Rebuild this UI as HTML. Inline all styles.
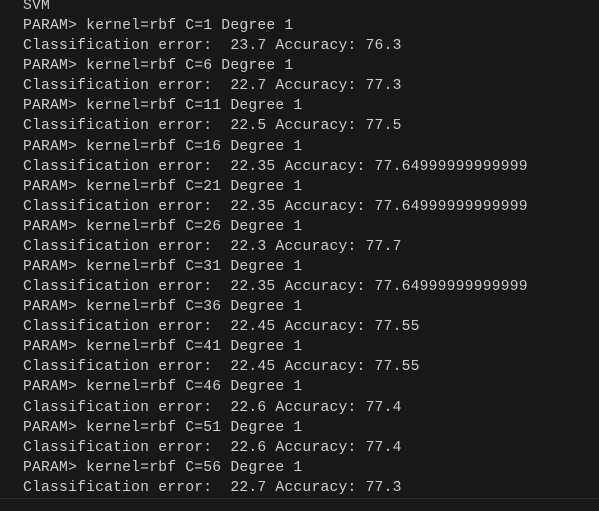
<!DOCTYPE html>
<html><head><style>
html,body{margin:0;padding:0;background:#181818;width:599px;height:511px;overflow:hidden}
.t{position:absolute;left:23px;top:-4px;font-family:"Liberation Mono",monospace;font-size:14.7px;letter-spacing:0.2px;line-height:20.08px;color:#cccccc;white-space:pre}
.hr{position:absolute;left:0;top:498px;width:599px;height:1px;background:#2b2b2b}
</style></head><body>
<div class="t">SVM
PARAM&gt; kernel=rbf C=1 Degree 1
Classification error:  23.7 Accuracy: 76.3
PARAM&gt; kernel=rbf C=6 Degree 1
Classification error:  22.7 Accuracy: 77.3
PARAM&gt; kernel=rbf C=11 Degree 1
Classification error:  22.5 Accuracy: 77.5
PARAM&gt; kernel=rbf C=16 Degree 1
Classification error:  22.35 Accuracy: 77.64999999999999
PARAM&gt; kernel=rbf C=21 Degree 1
Classification error:  22.35 Accuracy: 77.64999999999999
PARAM&gt; kernel=rbf C=26 Degree 1
Classification error:  22.3 Accuracy: 77.7
PARAM&gt; kernel=rbf C=31 Degree 1
Classification error:  22.35 Accuracy: 77.64999999999999
PARAM&gt; kernel=rbf C=36 Degree 1
Classification error:  22.45 Accuracy: 77.55
PARAM&gt; kernel=rbf C=41 Degree 1
Classification error:  22.45 Accuracy: 77.55
PARAM&gt; kernel=rbf C=46 Degree 1
Classification error:  22.6 Accuracy: 77.4
PARAM&gt; kernel=rbf C=51 Degree 1
Classification error:  22.6 Accuracy: 77.4
PARAM&gt; kernel=rbf C=56 Degree 1
Classification error:  22.7 Accuracy: 77.3</div>
<div class="hr"></div>
</body></html>
